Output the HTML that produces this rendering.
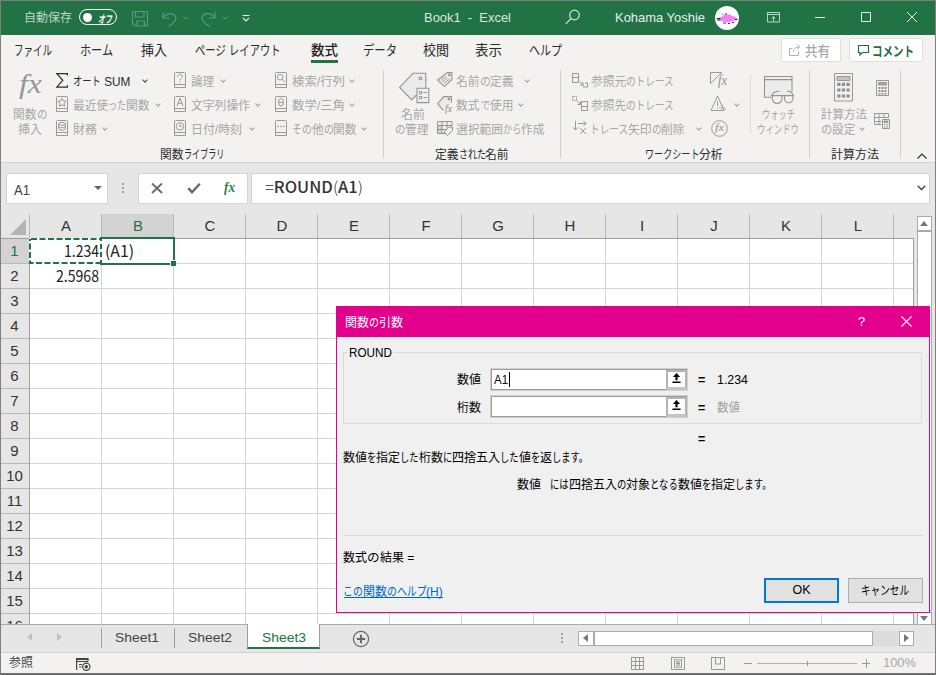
<!DOCTYPE html>
<html lang="ja"><head>
<meta charset="utf-8">
<title>Book1 - Excel</title>
<style>
*{box-sizing:border-box;margin:0;padding:0}
html,body{width:936px;height:675px;overflow:hidden;background:#f3f2f1}
body{position:relative;font-family:"Liberation Sans","Noto Sans CJK JP",sans-serif;font-size:12px;color:#262626}
.abs{position:absolute}
.t{position:absolute;white-space:nowrap;line-height:1;display:inline-block}
svg{position:absolute;overflow:visible}
#title{position:absolute;left:0;top:0;width:936px;height:35px;background:#217346}
#title .t{color:#fff}
#tabs{position:absolute;left:0;top:35px;width:936px;height:28px;background:#f3f2f1}
#tabs .t{font-size:13.5px;color:#2b2b2b;top:9px}
#ribbon{position:absolute;left:0;top:63px;width:936px;height:100px;background:#f3f2f1;border-bottom:1px solid #d2d2d2}
#ribbon .t{font-size:12px;color:#a6a6a6;margin-top:2px}
#ribbon .t.g{color:#2b2b2b}
#ribbon svg{stroke:#999;fill:none;stroke-width:1}
.sep{position:absolute;width:1px;background:#d2d0ce}
.chev{position:absolute;width:4px;height:4px;margin:2px 0 0 1px;border-right:1.3px solid #a0a0a0;border-bottom:1.3px solid #a0a0a0;transform:rotate(45deg)}
#fbar{position:absolute;left:0;top:163px;width:936px;height:51px;background:#e6e6e6;border-top:1px solid #e6e6e6}
#grid{position:absolute;left:0;top:214px;width:936px;height:410px;background:#fff}
#sheets{position:absolute;left:0;top:624px;width:936px;height:28px;background:#e6e6e6;border-top:1px solid #ababab}
#status{position:absolute;left:0;top:652px;width:936px;height:23px;background:#f3f2f1;border-top:1px solid #d0d0d0}
#frame{position:absolute;left:0;top:0;width:936px;height:675px;border:1px solid #7f7f7f;border-bottom:2px solid #6e6e6e}
#dlg{position:absolute;left:336px;top:306px;width:594px;height:307px;background:#f0f0f0;border:1px solid #e3008c}
#dlg .t{font-size:12.500px;color:#000}
</style>
</head>
<body>
<div id="title">
<span class="t" style="left:24px;top:12px;font-size:12px;color:#bcd7c8"><span style="display: inline-block; width: 48px;"><span style="display: inline-block; white-space: pre; transform-origin: 0px 0px; transform: scaleX(0.9997);">自動保存</span></span></span>
<div class="abs" style="left:79px;top:9px;width:38px;height:16px;border:1.400px solid #fff;border-radius:8px"></div>
<div class="abs" style="left:82.500px;top:12.500px;width:9px;height:9px;border-radius:5px;background:#fff"></div>
<span class="t" style="left:98px;top:13.500px;font-size:10.500px;font-weight:bold;font-style:italic"><span style="display: inline-block; width: 14px;"><span style="display: inline-block; white-space: pre; transform-origin: 0px 0px; transform: scaleX(0.6667);">オフ</span></span></span>
<svg style="left:133px;top:10px" width="120" height="18" viewBox="0 0 120 18" fill="none" stroke="#5b987a" stroke-width="1.2">
<path d="M-0.500 1.500h15v14.500h-12.500l-2.500-2.500z"></path><path d="M2.500 1.500v5.500h8.500v-5.500M4 16v-5h7.500v5"></path>
<path d="M30 2v6h6"></path><path d="M30 8c3-5 10-6 12.5-1.5c2 4-2 7-7 10"></path>
<path d="M50.5 6.5l2.5 2.5l2.5-2.500" stroke-width="1"></path>
<path d="M82 2v6h-6"></path><path d="M82 8c-3-5-10-6-12.500-1.500c-2 4 2 7 7 10"></path>
<path d="M89.500 6.500l2.500 2.500l2.500-2.500" stroke-width="1"></path>
<path d="M109.500 5.500h7M110 8l3 3l3-3" stroke="#e3eee7" stroke-width="1.200"></path>
</svg>
<span class="t" style="left: 424px; top: 11px; font-size: 13px; color: rgb(217, 232, 223); transform-origin: 0px 0px; transform: scaleX(0.995);">Book1&nbsp; -&nbsp; Excel</span>
<svg style="left:565px;top:9px" width="16" height="16" viewBox="0 0 16 16" fill="none" stroke="#d0e2d7" stroke-width="1.2"><circle cx="9.500" cy="6" r="4.800"></circle><path d="M6 9.500L0.800 14.800"></path></svg>
<span class="t" style="left: 615px; top: 11px; font-size: 13px; color: rgb(230, 240, 234); transform-origin: 0px 0px; transform: scaleX(0.996);">Kohama Yoshie</span>
<div class="abs" style="left:715px;top:6px;width:24px;height:24px;border-radius:12px;background:#fff"></div>
<svg style="left:715px;top:6px" width="24" height="24" viewBox="0 0 24 24" fill="none"><path d="M2 13.500c1-2 3-2 5-2.500c1-2 3-3 5-2c2-1 4 0 5 1c2 0 4 1 5.500 3c-2 2-4 2-6 2.500c-3 1-6 1-8 0c-2 0-4-0.500-6.500-2z" fill="#fb7cfb"></path><path d="M1.500 12.500h4M2 14h3M8 17h3M13 17.500h2M7 8.500l1-1M10 8h2M17 16.500h2M20 13.500h2.500" stroke="#222" stroke-width="0.900"></path></svg>
<svg style="left:767px;top:12px" width="13" height="10" viewBox="0 0 13 10" fill="none" stroke="#b9d5c5" stroke-width="1"><path d="M0.500 0.500h12v9.500h-12zM0.500 2.500h12M6.500 10v-5.500M4.500 6.500l2-2l2 2"></path></svg>
<svg style="left:814px;top:11px" width="110" height="12" viewBox="0 0 110 12" fill="none" stroke="#e3eee8" stroke-width="1"><path d="M1 6.500h10M47.500 1.500h9v9h-9zM93 1l10 10M103 1l-10 10"></path></svg>
</div>
<div id="tabs">
<span class="t" style="left:14px"><span style="display: inline-block; width: 38px;"><span style="display: inline-block; white-space: pre; transform-origin: 0px 0px; transform: scaleX(0.7037);">ファイル</span></span></span>
<span class="t" style="left:80px"><span style="display: inline-block; width: 33px;"><span style="display: inline-block; white-space: pre; transform-origin: 0px 0px; transform: scaleX(0.8228);">ホーム</span></span></span>
<span class="t" style="left:141px"><span style="display: inline-block; width: 26px;"><span style="display: inline-block; white-space: pre; transform-origin: 0px 0px; transform: scaleX(0.963);">挿入</span></span></span>
<span class="t" style="left:195px"><span style="display: inline-block; width: 30.75px;"><span style="display: inline-block; white-space: pre; transform-origin: 0px 0px; transform: scaleX(0.7644);">ページ</span></span><span style="display: inline-block; width: 3.65px;"><span style="display: inline-block; white-space: pre; transform-origin: 0px 0px; transform: scaleX(0.97);"> </span></span><span style="display: inline-block; width: 51.59px;"><span style="display: inline-block; white-space: pre; transform-origin: 0px 0px; transform: scaleX(0.7644);">レイアウト</span></span></span>
<span class="t" style="left:311px;font-weight:500;color:#1e1e1e"><span style="display: inline-block; width: 27px;"><span style="display: inline-block; white-space: pre; transform-origin: 0px 0px; transform: scaleX(1);">数式</span></span></span>
<div class="abs" style="left:311px;top:25px;width:27px;height:3px;background:#217346"></div>
<span class="t" style="left:363px"><span style="display: inline-block; width: 34px;"><span style="display: inline-block; white-space: pre; transform-origin: 0px 0px; transform: scaleX(0.8395);">データ</span></span></span>
<span class="t" style="left:423px"><span style="display: inline-block; width: 26px;"><span style="display: inline-block; white-space: pre; transform-origin: 0px 0px; transform: scaleX(0.963);">校閲</span></span></span>
<span class="t" style="left:475px"><span style="display: inline-block; width: 27px;"><span style="display: inline-block; white-space: pre; transform-origin: 0px 0px; transform: scaleX(1);">表示</span></span></span>
<span class="t" style="left:529px"><span style="display: inline-block; width: 33px;"><span style="display: inline-block; white-space: pre; transform-origin: 0px 0px; transform: scaleX(0.8148);">ヘルプ</span></span></span>
<div class="abs" style="left:781px;top:3px;width:60px;height:24px;background:#fff;border:1px solid #e1dfdd;border-radius:2px"></div>
<svg style="left:789px;top:9px" width="13" height="12" viewBox="0 0 13 12" fill="none" stroke="#b0b0b0" stroke-width="1"><path d="M3.500 4.500h-3v7h9v-4M4.500 8c0-3 2-5 6-5M8 0.500l2.500 2.500l-2.500 2.500"></path></svg>
<span class="t" style="left:805px;top:10px;color:#a6a6a6;font-weight:500"><span style="display: inline-block; width: 25px;"><span style="display: inline-block; white-space: pre; transform-origin: 0px 0px; transform: scaleX(0.9259);">共有</span></span></span>
<div class="abs" style="left:849px;top:3px;width:74px;height:24px;background:#fff;border:1px solid #e1dfdd;border-radius:2px"></div>
<svg style="left:858px;top:10px" width="11" height="11" viewBox="0 0 11 11" fill="none" stroke="#1e6e42" stroke-width="1.2"><path d="M0.500 0.500h10v7h-6l-2.500 2.500v-2.500h-1.500z"></path></svg>
<span class="t" style="left:872px;top:10px;color:#1e6e42;font-weight:bold"><span style="display: inline-block; width: 42px;"><span style="display: inline-block; white-space: pre; transform-origin: 0px 0px; transform: scaleX(0.7778);">コメント</span></span></span>
</div>
<div id="ribbon">
<span class="t" style="left: 19px; top: 6px; font-family: &quot;Liberation Serif&quot;, serif; font-style: italic; font-size: 27px; color: rgb(150, 150, 150); transform-origin: 0px 0px; transform: scaleX(1.1795);">fx</span>
<span class="t" style="left:13px;top:44px"><span style="display: inline-block; width: 23.54px;"><span style="display: inline-block; white-space: pre; transform-origin: 0px 0px; transform: scaleX(0.98);">関数</span></span><span style="display: inline-block; width: 10.46px;"><span style="display: inline-block; white-space: pre; transform-origin: 0px 0px; transform: scaleX(0.8709);">の</span></span></span>
<span class="t" style="left:18px;top:59px"><span style="display: inline-block; width: 24px;"><span style="display: inline-block; white-space: pre; transform-origin: 0px 0px; transform: scaleX(0.9993);">挿入</span></span></span>
<svg style="left:56px;top:10px;stroke:#2b2b2b;stroke-width:1.2" width="12" height="15" viewBox="0 0 12 15"><path d="M11.400 2.500V0.600H0.800L6.800 7.300L0.800 14.200H11.400V12.300"></path></svg>
<span class="t g" style="left:73px;top:11px"><span style="display: inline-block; width: 27.6px;"><span style="display: inline-block; white-space: pre; transform-origin: 0px 0px; transform: scaleX(0.7663);">オート</span></span><span style="display: inline-block; width: 29.4px;"><span style="display: inline-block; white-space: pre; transform-origin: 0px 0px; transform: scaleX(0.98);"> SUM</span></span></span>
<div class="chev" style="left:142px;top:13px;border-color:#444"></div>
<svg style="left:56px;top:33px" width="12" height="16" viewBox="0 0 12 16"><path d="M1.500 0.500h9a1 1 0 0 1 1 1v14h-11v-14a1 1 0 0 1 1-1zM0.500 12.500h11"></path><path d="M6 2.200l1.300 2.700l2.900 0.400l-2.100 2l0.500 2.900l-2.600-1.400l-2.600 1.400l0.500-2.900l-2.100-2l2.900-0.400z"></path></svg>
<span class="t" style="left:73px;top:35px"><span style="display: inline-block; width: 35.3px;"><span style="display: inline-block; white-space: pre; transform-origin: 0px 0px; transform: scaleX(0.98);">最近使</span></span><span style="display: inline-block; width: 18.17px;"><span style="display: inline-block; white-space: pre; transform-origin: 0px 0px; transform: scaleX(0.7566);">った</span></span><span style="display: inline-block; width: 23.54px;"><span style="display: inline-block; white-space: pre; transform-origin: 0px 0px; transform: scaleX(0.98);">関数</span></span></span>
<div class="chev" style="left:155px;top:37px"></div>
<svg style="left:56px;top:57px" width="12" height="16" viewBox="0 0 12 16"><path d="M1.500 0.500h9a1 1 0 0 1 1 1v14h-11v-14a1 1 0 0 1 1-1zM0.500 12.500h11"></path><ellipse cx="6" cy="3.800" rx="3.300" ry="1.500"></ellipse><path d="M2.700 3.800v5c0 2 6.600 2 6.600 0v-5M2.700 6.300c0 2 6.600 2 6.600 0"></path></svg>
<span class="t" style="left:73px;top:59px"><span style="display: inline-block; width: 24px;"><span style="display: inline-block; white-space: pre; transform-origin: 0px 0px; transform: scaleX(0.9993);">財務</span></span></span>
<div class="chev" style="left:102px;top:61px"></div>

<svg style="left:174px;top:9px" width="12" height="16" viewBox="0 0 12 16"><path d="M1.500 0.500h9a1 1 0 0 1 1 1v14h-11v-14a1 1 0 0 1 1-1zM0.500 12.500h11"></path><path d="M3.800 4.700c0-3 4.600-3 4.600-0.300c0 1.900-2.300 1.900-2.300 3.800M6.100 9.400v1.300"></path></svg>
<span class="t" style="left:191px;top:11px"><span style="display: inline-block; width: 23px;"><span style="display: inline-block; white-space: pre; transform-origin: 0px 0px; transform: scaleX(0.9577);">論理</span></span></span>
<div class="chev" style="left:220px;top:13px"></div>
<svg style="left:174px;top:33px" width="12" height="16" viewBox="0 0 12 16"><path d="M1.500 0.500h9a1 1 0 0 1 1 1v14h-11v-14a1 1 0 0 1 1-1zM0.500 12.500h11"></path><path d="M3 10l3-7.800l3 7.800M4 7.300h4"></path></svg>
<span class="t" style="left:191px;top:35px"><span style="display: inline-block; width: 59px;"><span style="display: inline-block; white-space: pre; transform-origin: 0px 0px; transform: scaleX(0.9831);">文字列操作</span></span></span>
<div class="chev" style="left:255px;top:37px"></div>
<svg style="left:174px;top:57px" width="12" height="16" viewBox="0 0 12 16"><path d="M1.500 0.500h9a1 1 0 0 1 1 1v14h-11v-14a1 1 0 0 1 1-1zM0.500 12.500h11"></path><circle cx="6" cy="6.300" r="3.800"></circle><path d="M6 3.800v2.700h2.200"></path></svg>
<span class="t" style="left:191px;top:59px"><span style="display: inline-block; width: 51px;"><span style="display: inline-block; white-space: pre; transform-origin: 0px 0px; transform: scaleX(0.9933);">日付/時刻</span></span></span>
<div class="chev" style="left:249px;top:61px"></div>

<svg style="left:275px;top:9px" width="12" height="16" viewBox="0 0 12 16"><path d="M1.500 0.500h9a1 1 0 0 1 1 1v14h-11v-14a1 1 0 0 1 1-1zM0.500 12.500h11"></path><circle cx="5.200" cy="5.200" r="2.800"></circle><path d="M7.200 7.300l2.600 2.800"></path></svg>
<span class="t" style="left:292px;top:11px"><span style="display: inline-block; width: 53px;"><span style="display: inline-block; white-space: pre; transform-origin: 0px 0px; transform: scaleX(1.0323);">検索/行列</span></span></span>
<div class="chev" style="left:349px;top:13px"></div>
<svg style="left:275px;top:33px" width="12" height="16" viewBox="0 0 12 16"><path d="M1.500 0.500h9a1 1 0 0 1 1 1v14h-11v-14a1 1 0 0 1 1-1zM0.500 12.500h11"></path><ellipse cx="6" cy="6.300" rx="2.400" ry="3.900"></ellipse><path d="M3.600 6.300h4.800"></path></svg>
<span class="t" style="left:292px;top:35px"><span style="display: inline-block; width: 53px;"><span style="display: inline-block; white-space: pre; transform-origin: 0px 0px; transform: scaleX(1.0323);">数学/三角</span></span></span>
<div class="chev" style="left:349px;top:37px"></div>
<svg style="left:275px;top:57px" width="12" height="16" viewBox="0 0 12 16"><path d="M1.500 0.500h9a1 1 0 0 1 1 1v14h-11v-14a1 1 0 0 1 1-1zM0.500 12.500h11"></path><path d="M2.500 6.500h1.400M5.300 6.500h1.400M8.100 6.500h1.400" stroke-width="1.400"></path></svg>
<span class="t" style="left:292px;top:59px"><span style="display: inline-block; width: 19.79px;"><span style="display: inline-block; white-space: pre; transform-origin: 0px 0px; transform: scaleX(0.824);">その</span></span><span style="display: inline-block; width: 11.78px;"><span style="display: inline-block; white-space: pre; transform-origin: 0px 0px; transform: scaleX(0.98);">他</span></span><span style="display: inline-block; width: 9.9px;"><span style="display: inline-block; white-space: pre; transform-origin: 0px 0px; transform: scaleX(0.824);">の</span></span><span style="display: inline-block; width: 23.54px;"><span style="display: inline-block; white-space: pre; transform-origin: 0px 0px; transform: scaleX(0.98);">関数</span></span></span>
<div class="chev" style="left:361px;top:61px"></div>
<span class="t g" style="left:160px;top:84px"><span style="display: inline-block; width: 23.54px;"><span style="display: inline-block; white-space: pre; transform-origin: 0px 0px; transform: scaleX(0.98);">関数</span></span><span style="display: inline-block; width: 40.46px;"><span style="display: inline-block; white-space: pre; transform-origin: 0px 0px; transform: scaleX(0.6742);">ライブラリ</span></span></span>
<div class="sep" style="left:383px;top:7px;height:88px"></div>

<svg style="left:399px;top:9px;stroke:#949494;stroke-width:1.100" width="31" height="32" viewBox="0 0 31 32"><path d="M0.600 15.400L14 1.300H26.800V13.500L12.600 27.700z" fill="#ebebeb" stroke="none"></path><path d="M26.800 16V1.300H14L0.600 15.400L12.600 27.700L17.500 23"></path><circle cx="21.400" cy="6.400" r="1.300"></circle><path d="M18 16.300h11.800v14.300h-11.800z" fill="#f0f0f0"></path><path d="M20.500 19.500h2.300v2.300h-2.300zM20.500 24.500h2.300v2.300h-2.300zM24.500 20.600h3.500M24.500 25.600h3.500" stroke-width="1"></path></svg>
<span class="t" style="left:401px;top:44px"><span style="display: inline-block; width: 24px;"><span style="display: inline-block; white-space: pre; transform-origin: 0px 0px; transform: scaleX(0.9993);">名前</span></span></span>
<span class="t" style="left:395px;top:59px"><span style="display: inline-block; width: 10.46px;"><span style="display: inline-block; white-space: pre; transform-origin: 0px 0px; transform: scaleX(0.8709);">の</span></span><span style="display: inline-block; width: 23.54px;"><span style="display: inline-block; white-space: pre; transform-origin: 0px 0px; transform: scaleX(0.98);">管理</span></span></span>
<svg style="left:437px;top:9px;stroke:#949494;stroke-width:1.100" width="17" height="15" viewBox="0 0 17 15"><path d="M0.600 8L10.400 0.600H14.900V7.500L7.500 14.600z" fill="#ebebeb"></path><circle cx="12.300" cy="3" r="0.800" fill="#8e8e8e"></circle><path d="M3.800 8.300l5-4M5.500 9.800l5-4M7.200 11.300l5-4" stroke-width="0.900"></path></svg>
<span class="t" style="left:456px;top:11px"><span style="display: inline-block; width: 23.54px;"><span style="display: inline-block; white-space: pre; transform-origin: 0px 0px; transform: scaleX(0.98);">名前</span></span><span style="display: inline-block; width: 10.93px;"><span style="display: inline-block; white-space: pre; transform-origin: 0px 0px; transform: scaleX(0.9096);">の</span></span><span style="display: inline-block; width: 23.54px;"><span style="display: inline-block; white-space: pre; transform-origin: 0px 0px; transform: scaleX(0.98);">定義</span></span></span>
<div class="chev" style="left:524px;top:13px"></div>
<svg style="left:437px;top:33px;stroke:#949494;stroke-width:1.100" width="17" height="16" viewBox="0 0 17 16"><path d="M14.500 6.500V0.600H6.800L0.600 7.700L6.400 14.400" fill="#ebebeb"></path><circle cx="12" cy="3" r="0.800" fill="#8e8e8e"></circle></svg><span class="t" style="left: 445px; top: 39px; font-family: &quot;Liberation Serif&quot;, serif; font-style: italic; font-size: 10px; color: rgb(133, 133, 133); transform-origin: 0px 0px; transform: scaleX(0.9697);">fx</span>
<span class="t" style="left:456px;top:35px"><span style="display: inline-block; width: 23.54px;"><span style="display: inline-block; white-space: pre; transform-origin: 0px 0px; transform: scaleX(0.98);">数式</span></span><span style="display: inline-block; width: 10.93px;"><span style="display: inline-block; white-space: pre; transform-origin: 0px 0px; transform: scaleX(0.9096);">で</span></span><span style="display: inline-block; width: 23.54px;"><span style="display: inline-block; white-space: pre; transform-origin: 0px 0px; transform: scaleX(0.98);">使用</span></span></span>
<div class="chev" style="left:518px;top:37px"></div>
<svg style="left:437px;top:58px;stroke:#909090;stroke-width:1" width="17" height="16" viewBox="0 0 17 16"><path d="M0.600 4.500h4.400v8h-4.400z" fill="#d6d6d6" stroke="none"></path><path d="M8 12.500H0.600V0.600H15V5M0.600 4.500H15M0.600 8.500H9M5 0.600V12.500M10 0.600V7"></path><path d="M7 11L12 6H15.500V9.500L10.500 14.500z" fill="#f0f0f0"></path></svg>
<span class="t" style="left:456px;top:59px"><span style="display: inline-block; width: 47.06px;"><span style="display: inline-block; white-space: pre; transform-origin: 0px 0px; transform: scaleX(0.98);">選択範囲</span></span><span style="display: inline-block; width: 18.41px;"><span style="display: inline-block; white-space: pre; transform-origin: 0px 0px; transform: scaleX(0.7666);">から</span></span><span style="display: inline-block; width: 23.54px;"><span style="display: inline-block; white-space: pre; transform-origin: 0px 0px; transform: scaleX(0.98);">作成</span></span></span>
<span class="t g" style="left:435px;top:84px"><span style="display: inline-block; width: 23.54px;"><span style="display: inline-block; white-space: pre; transform-origin: 0px 0px; transform: scaleX(0.98);">定義</span></span><span style="display: inline-block; width: 26.93px;"><span style="display: inline-block; white-space: pre; transform-origin: 0px 0px; transform: scaleX(0.7477);">された</span></span><span style="display: inline-block; width: 23.54px;"><span style="display: inline-block; white-space: pre; transform-origin: 0px 0px; transform: scaleX(0.98);">名前</span></span></span>
<div class="sep" style="left:560px;top:7px;height:88px"></div>

<svg style="left:572px;top:10px" width="17" height="15" viewBox="0 0 17 15"><path d="M0.500 0.500h6v9h-6zM0.500 4.500h6M7.500 8.500l3.500 3.500M8 12h3v-3M13 10h2.500v4h-4v-1.500"></path></svg>
<span class="t" style="left:591px;top:11px"><span style="display: inline-block; width: 35.3px;"><span style="display: inline-block; white-space: pre; transform-origin: 0px 0px; transform: scaleX(0.98);">参照元</span></span><span style="display: inline-block; width: 47.7px;"><span style="display: inline-block; white-space: pre; transform-origin: 0px 0px; transform: scaleX(0.803);">のトレース</span></span></span>
<svg style="left:572px;top:33px" width="17" height="16" viewBox="0 0 17 16"><path d="M0.500 0.500h4v4h-4z" stroke-dasharray="2 1"></path><path d="M5 5l3.500 3M5.500 8.500h3v-3M9.500 5.500h6v9h-6zM9.500 10.500h6"></path></svg>
<span class="t" style="left:591px;top:35px"><span style="display: inline-block; width: 35.3px;"><span style="display: inline-block; white-space: pre; transform-origin: 0px 0px; transform: scaleX(0.98);">参照先</span></span><span style="display: inline-block; width: 47.7px;"><span style="display: inline-block; white-space: pre; transform-origin: 0px 0px; transform: scaleX(0.803);">のトレース</span></span></span>
<svg style="left:572px;top:57px" width="17" height="15" viewBox="0 0 17 15"><path d="M3.500 1v9M1 7.500l2.500 2.500l2.500-2.500M6 3.500h8M11.500 1l2.500 2.500l-2.500 2.500M8 8l6 6M14 8l-6 6"></path></svg>
<span class="t" style="left:590px;top:59px"><span style="display: inline-block; width: 38.24px;"><span style="display: inline-block; white-space: pre; transform-origin: 0px 0px; transform: scaleX(0.8066);">トレース</span></span><span style="display: inline-block; width: 23.54px;"><span style="display: inline-block; white-space: pre; transform-origin: 0px 0px; transform: scaleX(0.98);">矢印</span></span><span style="display: inline-block; width: 9.69px;"><span style="display: inline-block; white-space: pre; transform-origin: 0px 0px; transform: scaleX(0.8066);">の</span></span><span style="display: inline-block; width: 23.54px;"><span style="display: inline-block; white-space: pre; transform-origin: 0px 0px; transform: scaleX(0.98);">削除</span></span></span>
<div class="chev" style="left:696px;top:61px"></div>
<svg style="left:710px;top:8px" width="18" height="17" viewBox="0 0 18 17"><path d="M0.500 1.500h11l-11 11z"></path></svg>
<span class="t" style="left: 718px; top: 9px; font-family: &quot;Liberation Serif&quot;, serif; font-style: italic; font-size: 14px; color: rgb(144, 144, 144); transform-origin: 0px 0px; transform: scaleX(0.8903);">fx</span>
<svg style="left:710px;top:32px" width="18" height="17" viewBox="0 0 18 17"><path d="M7.500 1L1 15.500h13zM7.500 6v5M7.500 13v1"></path><path d="M11 9l5 6M9 12l5 3" stroke-width="0.800"></path></svg>
<div class="chev" style="left:734px;top:37px"></div>
<svg style="left:711px;top:57px" width="17" height="17" viewBox="0 0 17 17"><circle cx="8.500" cy="8.500" r="7.800"></circle></svg>
<span class="t" style="left: 715px; top: 57px; font-family: &quot;Liberation Serif&quot;, serif; font-style: italic; font-size: 11px; color: rgb(144, 144, 144); transform-origin: 0px 0px; transform: scaleX(1.1316);">fx</span>
<span class="t g" style="left:645px;top:84px"><span style="display: inline-block; width: 54.46px;"><span style="display: inline-block; white-space: pre; transform-origin: 0px 0px; transform: scaleX(0.7563);">ワークシート</span></span><span style="display: inline-block; width: 23.54px;"><span style="display: inline-block; white-space: pre; transform-origin: 0px 0px; transform: scaleX(0.98);">分析</span></span></span>
<div class="sep" style="left:750px;top:12px;height:58px;background:#dddbd9"></div>

<svg style="left:764px;top:13px;stroke:#949494;stroke-width:1.100" width="32" height="29" viewBox="0 0 32 29"><path d="M0.500 0.500h27.500v19h-27.500z" fill="#ececec" stroke="none"></path><path d="M7.500 21.200H0.500V0.500H28V15.500M0.500 3.600H28"></path><path d="M6.800 19.600H29.500M8.400 19.600v3a4.800 4.800 0 0 0 9.600 0v-3z" fill="#f3f2f1"></path><path d="M20.500 19.600v3a4.200 4.200 0 0 0 8.400 0v-3z" fill="#f3f2f1"></path><path d="M8 19.600c0-3 4-4.600 7.600-4.300M29 19.600c0-3-3-4.600-6-4.300"></path></svg>
<span class="t" style="left:762px;top:44px"><span style="display: inline-block; width: 33px;"><span style="display: inline-block; white-space: pre; transform-origin: 0px 0px; transform: scaleX(0.6873);">ウォッチ</span></span></span>
<span class="t" style="left:757px;top:59px"><span style="display: inline-block; width: 42px;"><span style="display: inline-block; white-space: pre; transform-origin: 0px 0px; transform: scaleX(0.6998);">ウィンドウ</span></span></span>
<div class="sep" style="left:809px;top:7px;height:88px"></div>

<svg style="left:834px;top:10px" width="19" height="29" viewBox="0 0 19 29"><path d="M0.500 0.500h18v27.500h-18z" fill="#f0f0f0"></path><path d="M3 3.500h13v4h-13z" fill="#c4c4c4"></path><path d="M3.3 9.8h3.200v3.200h-3.200zM7.9 9.8h3.200v3.200h-3.200zM12.5 9.8h3.200v3.200h-3.200zM3.3 15.4h3.200v3.200h-3.200zM7.9 15.4h3.200v3.200h-3.200zM12.5 15.4h3.200v3.200h-3.200zM3.3 21.4h3.200v3.200h-3.200zM7.9 21.4h3.200v3.200h-3.200zM12.5 21.4h3.200v3.200h-3.200z" fill="#8e8e8e" stroke="none"></path></svg>
<span class="t" style="left:821px;top:44px"><span style="display: inline-block; width: 46px;"><span style="display: inline-block; white-space: pre; transform-origin: 0px 0px; transform: scaleX(0.958);">計算方法</span></span></span>
<span class="t" style="left:821px;top:59px"><span style="display: inline-block; width: 11.46px;"><span style="display: inline-block; white-space: pre; transform-origin: 0px 0px; transform: scaleX(0.9541);">の</span></span><span style="display: inline-block; width: 23.54px;"><span style="display: inline-block; white-space: pre; transform-origin: 0px 0px; transform: scaleX(0.98);">設定</span></span></span>
<div class="chev" style="left:859px;top:61px"></div>
<svg style="left:876px;top:17px" width="13" height="16" viewBox="0 0 13 16"><path d="M0.500 0.500h12v15h-12z"></path><path d="M2.500 2.500h8v2.500h-8z" fill="#a8a8a8"></path><path d="M2.500 7h2v2h-2zM5.500 7h2v2h-2zM8.500 7h2v2h-2zM2.500 10h2v2h-2zM5.500 10h2v2h-2zM8.500 10h2v2h-2zM2.500 13h2v1.500h-2zM5.500 13h2v1.500h-2zM8.500 13h2v1.500h-2z" fill="#8e8e8e" stroke="none"></path></svg>
<svg style="left:874px;top:50px" width="16" height="16" viewBox="0 0 16 16"><path d="M0.500 0.500h14v4M0.500 0.500v11h7M0.500 4.500h14M0.500 8.500h7M5 0.500v11M10 0.500v4"></path><path d="M8.500 6.500h7v9h-7z"></path><path d="M10 8h4v1.500h-4z" fill="#a8a8a8"></path><path d="M10 11h1.300v1.300h-1.300zM12.500 11h1.300v1.300h-1.300zM10 13.200h1.300v1.300h-1.300zM12.500 13.200h1.300v1.300h-1.300z" fill="#8e8e8e" stroke="none"></path></svg>
<span class="t g" style="left:831px;top:84px"><span style="display: inline-block; width: 48px;"><span style="display: inline-block; white-space: pre; transform-origin: 0px 0px; transform: scaleX(0.9997);">計算方法</span></span></span>
<div class="sep" style="left:900px;top:7px;height:88px"></div>
<svg style="left:917px;top:90px;stroke:#333;stroke-width:1.200" width="10" height="6" viewBox="0 0 10 6"><path d="M0.500 5.500l4.500-4.500l4.500 4.500"></path></svg>
</div>
<div id="fbar">
<div class="abs" style="left:6px;top:9px;width:102px;height:31px;background:#fff;border:1px solid #d4d4d4"></div>
<span class="t" style="left: 14px; top: 19px; font-size: 14px; color: rgb(68, 68, 68); transform-origin: 0px 0px; transform: scaleX(0.9343);">A1</span>
<div class="abs" style="left:94px;top:22px;width:0;height:0;border-left:4px solid transparent;border-right:4px solid transparent;border-top:4px solid #666"></div>
<div class="abs" style="left:122px;top:19px;width:2px;height:2px;background:#a0a0a0;box-shadow:0 4px 0 #a0a0a0,0 8px 0 #a0a0a0"></div>
<div class="abs" style="left:138px;top:9px;width:110px;height:31px;background:#fff;border:1px solid #d4d4d4"></div>
<svg style="left:151px;top:18px" width="12" height="12" viewBox="0 0 12 12" fill="none" stroke="#6a6a6a" stroke-width="1.800"><path d="M1 1.500l10 9.500M11 1.500l-10 9.500"></path></svg>
<svg style="left:187px;top:18px" width="14" height="12" viewBox="0 0 14 12" fill="none" stroke="#6a6a6a" stroke-width="2.400"><path d="M1.200 6.200l3.800 4l7.800-8.500"></path></svg>
<span class="t" style="left: 224px; top: 17px; font-family: &quot;Liberation Serif&quot;, serif; font-style: italic; font-weight: bold; font-size: 14px; color: rgb(46, 125, 79); transform-origin: 0px 0px; transform: scaleX(0.9424);">fx</span>
<div class="abs" style="left:251px;top:9px;width:679px;height:31px;background:#fff;border:1px solid #d4d4d4"></div>
<span class="t" style="left: 265px; top: 15px; font-size: 15.5px; color: rgb(51, 51, 51); font-family: &quot;Noto Sans CJK JP&quot;, &quot;Liberation Sans&quot;, sans-serif; font-weight: 300; transform-origin: 0px 0px; transform: scaleX(1.0652);">=<b style="font-weight:500">ROUND</b>(<b style="font-weight:500">A1</b>)</span>
<svg style="left:917px;top:21px" width="9" height="6" viewBox="0 0 9 6" fill="none" stroke="#555" stroke-width="1.600"><path d="M0.800 0.800l3.700 3.700l3.700-3.700"></path></svg>
</div>
<div id="grid">
<div class="abs" style="left:0;top:0;width:914px;height:25px;background:#e6e6e6;border-bottom:1px solid #9e9e9e"></div>
<div class="abs" style="left:0;top:25px;width:30px;height:386px;background:#e6e6e6;border-right:1px solid #9e9e9e"></div>
<div class="abs" style="left:10px;top:5px;width:0;height:0;border-left:16px solid transparent;border-bottom:16px solid #b4b4b4"></div>
<div class="abs" style="left:102px;top:0;width:71px;height:24px;background:#d3d3d3"></div>
<div class="abs" style="left:0;top:25px;width:29px;height:24px;background:#d3d3d3"></div>
<div class="abs" style="left:29px;top:0;width:1px;height:24px;background:#b8b8b8"></div>
<span class="t" style="left:30px;top:4px;width:72px;text-align:center;font-size:15px;color:#333">A</span>
<div class="abs" style="left:101px;top:0;width:1px;height:24px;background:#b8b8b8"></div>
<div class="abs" style="left:101px;top:25px;width:1px;height:386px;background:#d4d4d4"></div>
<span class="t" style="left:102px;top:4px;width:72px;text-align:center;font-size:15px;color:#217346">B</span>
<div class="abs" style="left:173px;top:0;width:1px;height:24px;background:#b8b8b8"></div>
<div class="abs" style="left:173px;top:25px;width:1px;height:386px;background:#d4d4d4"></div>
<span class="t" style="left:174px;top:4px;width:72px;text-align:center;font-size:15px;color:#333">C</span>
<div class="abs" style="left:245px;top:0;width:1px;height:24px;background:#b8b8b8"></div>
<div class="abs" style="left:245px;top:25px;width:1px;height:386px;background:#d4d4d4"></div>
<span class="t" style="left:246px;top:4px;width:72px;text-align:center;font-size:15px;color:#333">D</span>
<div class="abs" style="left:317px;top:0;width:1px;height:24px;background:#b8b8b8"></div>
<div class="abs" style="left:317px;top:25px;width:1px;height:386px;background:#d4d4d4"></div>
<span class="t" style="left:318px;top:4px;width:72px;text-align:center;font-size:15px;color:#333">E</span>
<div class="abs" style="left:389px;top:0;width:1px;height:24px;background:#b8b8b8"></div>
<div class="abs" style="left:389px;top:25px;width:1px;height:386px;background:#d4d4d4"></div>
<span class="t" style="left:390px;top:4px;width:72px;text-align:center;font-size:15px;color:#333">F</span>
<div class="abs" style="left:461px;top:0;width:1px;height:24px;background:#b8b8b8"></div>
<div class="abs" style="left:461px;top:25px;width:1px;height:386px;background:#d4d4d4"></div>
<span class="t" style="left:462px;top:4px;width:72px;text-align:center;font-size:15px;color:#333">G</span>
<div class="abs" style="left:533px;top:0;width:1px;height:24px;background:#b8b8b8"></div>
<div class="abs" style="left:533px;top:25px;width:1px;height:386px;background:#d4d4d4"></div>
<span class="t" style="left:534px;top:4px;width:72px;text-align:center;font-size:15px;color:#333">H</span>
<div class="abs" style="left:605px;top:0;width:1px;height:24px;background:#b8b8b8"></div>
<div class="abs" style="left:605px;top:25px;width:1px;height:386px;background:#d4d4d4"></div>
<span class="t" style="left:606px;top:4px;width:72px;text-align:center;font-size:15px;color:#333">I</span>
<div class="abs" style="left:677px;top:0;width:1px;height:24px;background:#b8b8b8"></div>
<div class="abs" style="left:677px;top:25px;width:1px;height:386px;background:#d4d4d4"></div>
<span class="t" style="left:678px;top:4px;width:72px;text-align:center;font-size:15px;color:#333">J</span>
<div class="abs" style="left:749px;top:0;width:1px;height:24px;background:#b8b8b8"></div>
<div class="abs" style="left:749px;top:25px;width:1px;height:386px;background:#d4d4d4"></div>
<span class="t" style="left:750px;top:4px;width:72px;text-align:center;font-size:15px;color:#333">K</span>
<div class="abs" style="left:821px;top:0;width:1px;height:24px;background:#b8b8b8"></div>
<div class="abs" style="left:821px;top:25px;width:1px;height:386px;background:#d4d4d4"></div>
<span class="t" style="left:822px;top:4px;width:72px;text-align:center;font-size:15px;color:#333">L</span>
<div class="abs" style="left:893px;top:0;width:1px;height:24px;background:#b8b8b8"></div>
<div class="abs" style="left:893px;top:25px;width:1px;height:386px;background:#d4d4d4"></div>
<span class="t" style="left:0;top:29px;width:29px;text-align:center;font-size:15px;color:#217346">1</span>
<div class="abs" style="left:0;top:49px;width:29px;height:1px;background:#b8b8b8"></div>
<div class="abs" style="left:30px;top:49px;width:884px;height:1px;background:#d4d4d4"></div>
<span class="t" style="left:0;top:54px;width:29px;text-align:center;font-size:15px;color:#333">2</span>
<div class="abs" style="left:0;top:74px;width:29px;height:1px;background:#b8b8b8"></div>
<div class="abs" style="left:30px;top:74px;width:884px;height:1px;background:#d4d4d4"></div>
<span class="t" style="left:0;top:79px;width:29px;text-align:center;font-size:15px;color:#333">3</span>
<div class="abs" style="left:0;top:99px;width:29px;height:1px;background:#b8b8b8"></div>
<div class="abs" style="left:30px;top:99px;width:884px;height:1px;background:#d4d4d4"></div>
<span class="t" style="left:0;top:104px;width:29px;text-align:center;font-size:15px;color:#333">4</span>
<div class="abs" style="left:0;top:124px;width:29px;height:1px;background:#b8b8b8"></div>
<div class="abs" style="left:30px;top:124px;width:884px;height:1px;background:#d4d4d4"></div>
<span class="t" style="left:0;top:129px;width:29px;text-align:center;font-size:15px;color:#333">5</span>
<div class="abs" style="left:0;top:149px;width:29px;height:1px;background:#b8b8b8"></div>
<div class="abs" style="left:30px;top:149px;width:884px;height:1px;background:#d4d4d4"></div>
<span class="t" style="left:0;top:154px;width:29px;text-align:center;font-size:15px;color:#333">6</span>
<div class="abs" style="left:0;top:174px;width:29px;height:1px;background:#b8b8b8"></div>
<div class="abs" style="left:30px;top:174px;width:884px;height:1px;background:#d4d4d4"></div>
<span class="t" style="left:0;top:179px;width:29px;text-align:center;font-size:15px;color:#333">7</span>
<div class="abs" style="left:0;top:199px;width:29px;height:1px;background:#b8b8b8"></div>
<div class="abs" style="left:30px;top:199px;width:884px;height:1px;background:#d4d4d4"></div>
<span class="t" style="left:0;top:204px;width:29px;text-align:center;font-size:15px;color:#333">8</span>
<div class="abs" style="left:0;top:224px;width:29px;height:1px;background:#b8b8b8"></div>
<div class="abs" style="left:30px;top:224px;width:884px;height:1px;background:#d4d4d4"></div>
<span class="t" style="left:0;top:229px;width:29px;text-align:center;font-size:15px;color:#333">9</span>
<div class="abs" style="left:0;top:249px;width:29px;height:1px;background:#b8b8b8"></div>
<div class="abs" style="left:30px;top:249px;width:884px;height:1px;background:#d4d4d4"></div>
<span class="t" style="left:0;top:254px;width:29px;text-align:center;font-size:15px;color:#333">10</span>
<div class="abs" style="left:0;top:274px;width:29px;height:1px;background:#b8b8b8"></div>
<div class="abs" style="left:30px;top:274px;width:884px;height:1px;background:#d4d4d4"></div>
<span class="t" style="left:0;top:279px;width:29px;text-align:center;font-size:15px;color:#333">11</span>
<div class="abs" style="left:0;top:299px;width:29px;height:1px;background:#b8b8b8"></div>
<div class="abs" style="left:30px;top:299px;width:884px;height:1px;background:#d4d4d4"></div>
<span class="t" style="left:0;top:304px;width:29px;text-align:center;font-size:15px;color:#333">12</span>
<div class="abs" style="left:0;top:324px;width:29px;height:1px;background:#b8b8b8"></div>
<div class="abs" style="left:30px;top:324px;width:884px;height:1px;background:#d4d4d4"></div>
<span class="t" style="left:0;top:329px;width:29px;text-align:center;font-size:15px;color:#333">13</span>
<div class="abs" style="left:0;top:349px;width:29px;height:1px;background:#b8b8b8"></div>
<div class="abs" style="left:30px;top:349px;width:884px;height:1px;background:#d4d4d4"></div>
<span class="t" style="left:0;top:354px;width:29px;text-align:center;font-size:15px;color:#333">14</span>
<div class="abs" style="left:0;top:374px;width:29px;height:1px;background:#b8b8b8"></div>
<div class="abs" style="left:30px;top:374px;width:884px;height:1px;background:#d4d4d4"></div>
<span class="t" style="left:0;top:379px;width:29px;text-align:center;font-size:15px;color:#333">15</span>
<div class="abs" style="left:0;top:399px;width:29px;height:1px;background:#b8b8b8"></div>
<div class="abs" style="left:30px;top:399px;width:884px;height:1px;background:#d4d4d4"></div>
<span class="t" style="left:0;top:404px;width:29px;text-align:center;font-size:15px;color:#333">16</span>
<div class="abs" style="left:0;top:424px;width:29px;height:1px;background:#b8b8b8"></div>
<div class="abs" style="left:30px;top:424px;width:884px;height:1px;background:#d4d4d4"></div>
<span class="t" style="left: 64px; top: 28px; font-size: 16px; font-family: &quot;Noto Sans CJK JP&quot;, &quot;Liberation Sans&quot;, sans-serif; color: rgb(34, 34, 34); transform-origin: 0px 0px; transform: scaleX(0.8757);">1.234</span>
<span class="t" style="left: 56px; top: 53px; font-size: 16px; font-family: &quot;Noto Sans CJK JP&quot;, &quot;Liberation Sans&quot;, sans-serif; color: rgb(34, 34, 34); transform-origin: 0px 0px; transform: scaleX(0.8801);">2.5968</span>
<span class="t" style="left: 105px; top: 28px; font-size: 16px; font-family: &quot;Noto Sans CJK JP&quot;, &quot;Liberation Sans&quot;, sans-serif; color: rgb(34, 34, 34); transform-origin: 0px 0px; transform: scaleX(0.9851);">(A1)</span>
<svg style="left:29px;top:24px" width="73" height="26" viewBox="0 0 73 26" fill="none"><rect x="1" y="1" width="71" height="24" stroke="#fff" stroke-width="2"></rect><rect x="1" y="1" width="71" height="24" stroke="#217346" stroke-width="2" stroke-dasharray="6 2.500" stroke-dashoffset="-1"></rect></svg>
<div class="abs" style="left:100px;top:23px;width:75px;height:28px;border:2px solid #217346"></div>
<svg style="left:100px;top:23px" width="2" height="28" viewBox="0 0 2 28"><path d="M1 0v28" stroke="#fff" stroke-width="2" stroke-dasharray="3 5" stroke-dashoffset="-4"></path></svg>
<div class="abs" style="left:170px;top:46px;width:6px;height:6px;background:#217346;border-left:1px solid #fff;border-top:1px solid #fff"></div>
<div class="abs" style="left:914px;top:0;width:22px;height:411px;background:#e6e6e6"></div>
<div class="abs" style="left:913px;top:25px;width:1px;height:386px;background:#9e9e9e"></div>
<div class="abs" style="left:917px;top:2px;width:15px;height:15px;background:#fff;border:1px solid #ababab"></div>
<div class="abs" style="left:920px;top:7px;width:0;height:0;border-left:4.5px solid transparent;border-right:4.5px solid transparent;border-bottom:5px solid #777"></div>
<div class="abs" style="left:917px;top:17px;width:15px;height:380px;background:#fff;border:1px solid #ababab"></div>
<div class="abs" style="left:917px;top:398px;width:15px;height:13px;background:#fff;border:1px solid #ababab"></div>
<div class="abs" style="left:920px;top:402px;width:0;height:0;border-left:4.5px solid transparent;border-right:4.5px solid transparent;border-top:5px solid #777"></div>
</div>
<div id="sheets">
<div class="abs" style="left:27px;top:8px;width:0;height:0;border-top:4px solid transparent;border-bottom:4px solid transparent;border-right:5px solid #c0c0c0"></div>
<div class="abs" style="left:57px;top:8px;width:0;height:0;border-top:4px solid transparent;border-bottom:4px solid transparent;border-left:5px solid #c0c0c0"></div>
<div class="abs" style="left:101px;top:3px;width:1px;height:20px;background:#9e9e9e"></div>
<span class="t" style="left: 115px; top: 6px; font-size: 13px; color: rgb(68, 68, 68); transform-origin: 0px 0px; transform: scaleX(1.0679);">Sheet1</span>
<div class="abs" style="left:174px;top:3px;width:1px;height:20px;background:#9e9e9e"></div>
<span class="t" style="left: 188px; top: 6px; font-size: 13px; color: rgb(68, 68, 68); transform-origin: 0px 0px; transform: scaleX(1.0679);">Sheet2</span>
<div class="abs" style="left:247px;top:-1px;width:73px;height:25px;background:#fff;border-bottom:2px solid #217346;border-right:1px solid #9e9e9e;border-left:1px solid #9e9e9e"></div>
<span class="t" style="left: 262px; top: 6px; font-size: 13px; color: rgb(33, 115, 70); transform-origin: 0px 0px; transform: scaleX(1.0679);">Sheet3</span>
<svg style="left:352px;top:5px" width="18" height="18" viewBox="0 0 18 18" fill="none" stroke="#666" stroke-width="1.200"><circle cx="9" cy="9" r="7.600"></circle><path d="M9 4.800v8.400M4.800 9h8.400" stroke-width="1.900"></path></svg>
<div class="abs" style="left:561px;top:8px;width:2px;height:2px;background:#a0a0a0;box-shadow:0 4px 0 #a0a0a0,0 8px 0 #a0a0a0"></div>
<div class="abs" style="left:578px;top:6px;width:16px;height:15px;background:#fff;border:1px solid #ababab"></div>
<div class="abs" style="left:583px;top:9px;width:0;height:0;border-top:4px solid transparent;border-bottom:4px solid transparent;border-right:5px solid #777"></div>
<div class="abs" style="left:594px;top:6px;width:279px;height:15px;background:#fff;border:1px solid #ababab"></div>
<div class="abs" style="left:873px;top:6px;width:25px;height:15px;background:#dcdcdc"></div>
<div class="abs" style="left:899px;top:6px;width:15px;height:15px;background:#fff;border:1px solid #ababab"></div>
<div class="abs" style="left:904px;top:9px;width:0;height:0;border-top:4px solid transparent;border-bottom:4px solid transparent;border-left:5px solid #777"></div>
</div>
<div id="status">
<span class="t" style="left:9px;top:4px;font-size:12px;color:#444"><span style="display: inline-block; width: 24px;"><span style="display: inline-block; white-space: pre; transform-origin: 0px 0px; transform: scaleX(0.9993);">参照</span></span></span>
<svg style="left:76px;top:5px" width="15" height="13" viewBox="0 0 15 13" fill="none" stroke="#444" stroke-width="1.200"><path d="M0.600 12v-11.400h11.400v3M0.600 1.500h11.400M0.600 3.500h11.400M3 6.500h3M3 9h2.500"></path><circle cx="10.300" cy="8.800" r="3.600"></circle><circle cx="10.300" cy="8.800" r="1.700" fill="#444" stroke="none"></circle></svg>
<svg style="left:631px;top:4px" width="13" height="13" viewBox="0 0 13 12" preserveAspectRatio="none" fill="none" stroke="#9a9a9a" stroke-width="1"><path d="M0.500 0.500h12v11h-12zM0.500 4.200h12M0.500 7.900h12M4.500 0.500v11M8.500 0.500v11"></path></svg>
<svg style="left:671px;top:4px" width="14" height="13" viewBox="0 0 14 12" preserveAspectRatio="none" fill="none" stroke="#9a9a9a" stroke-width="1"><path d="M0.500 0.500h13v11h-13zM3.500 2.500h7v7h-7zM5 4.500h4M5 6h4M5 7.500h4"></path></svg>
<svg style="left:711px;top:4px" width="14" height="13" viewBox="0 0 14 12" preserveAspectRatio="none" fill="none" stroke="#9a9a9a" stroke-width="1"><path d="M0.500 0.500h13v11h-13zM4.500 0.500v6h5v-6"></path></svg>
<div class="abs" style="left:744px;top:10px;width:8px;height:1px;background:#9a9a9a"></div>
<div class="abs" style="left:757px;top:10px;width:100px;height:1px;background:#b0b0b0"></div>
<div class="abs" style="left:807px;top:8px;width:1px;height:5px;background:#9a9a9a"></div>
<div class="abs" style="left:862px;top:10px;width:8px;height:1px;background:#9a9a9a"></div>
<div class="abs" style="left:866px;top:6px;width:1px;height:9px;background:#9a9a9a"></div>
<span class="t" style="left: 883px; top: 4px; font-size: 12px; color: rgb(166, 166, 166); transform-origin: 0px 0px; transform: scaleX(1.0748);">100%</span>
</div>
<div id="dlg">
<div class="abs" style="left:0;top:0;width:592px;height:30px;background:#e3008c"></div>
<span class="t" style="left:8px;top:10px;color:#fff"><span style="display: inline-block; width: 24.02px;"><span style="display: inline-block; white-space: pre; transform-origin: 0px 0px; transform: scaleX(0.96);">関数</span></span><span style="display: inline-block; width: 9.97px;"><span style="display: inline-block; white-space: pre; transform-origin: 0px 0px; transform: scaleX(0.7966);">の</span></span><span style="display: inline-block; width: 24.02px;"><span style="display: inline-block; white-space: pre; transform-origin: 0px 0px; transform: scaleX(0.96);">引数</span></span></span>
<span class="t" style="left:521px;top:8px;color:#fff;font-size:13px">?</span>
<svg style="left:564px;top:9px" width="11" height="11" viewBox="0 0 11 11" fill="none" stroke="#fff" stroke-width="1.100"><path d="M0.500 0.500l10 10M10.500 0.500l-10 10"></path></svg>
<div class="abs" style="left:6px;top:45px;width:579px;height:72px;border:1px solid #dcdcdc"></div>
<div class="abs" style="left:10px;top:40px;width:47px;height:12px;background:#f0f0f0"></div><span class="t" style="left: 12px; top: 40px; transform-origin: 0px 0px; transform: scaleX(0.938);">ROUND</span>
<span class="t" style="left:120px;top:67px"><span style="display: inline-block; width: 24px;"><span style="display: inline-block; white-space: pre; transform-origin: 0px 0px; transform: scaleX(0.9594);">数値</span></span></span>
<div class="abs" style="left:154px;top:62px;width:196px;height:21px;background:#fff;border:1px solid #9c9c9c;box-shadow:0 0 0 1px #d0d0d0"></div>
<span class="t" style="left: 157px; top: 67px; transform-origin: 0px 0px; transform: scaleX(0.9152);">A1</span>
<div class="abs" style="left:172px;top:65px;width:1px;height:15px;background:#000"></div>
<div class="abs" style="left:329px;top:63px;width:21px;height:20px;background:#fff;border:2px solid #b4b4b4;border-bottom-width:3px;border-bottom-color:#c4c4c4"></div>
<svg style="left:335px;top:66px" width="9" height="10" viewBox="0 0 10 11" fill="#000" stroke="none"><path d="M5 0l4 4.500h-2.800v3.500h-2.400v-3.500h-2.800zM0.500 9.500h9v1.500h-9z"></path></svg>
<span class="t" style="left:361px;top:67px;font-weight:bold">=</span>
<span class="t" style="left: 380px; top: 67px; transform-origin: 0px 0px; transform: scaleX(0.991);">1.234</span>
<span class="t" style="left:120px;top:95px"><span style="display: inline-block; width: 24px;"><span style="display: inline-block; white-space: pre; transform-origin: 0px 0px; transform: scaleX(0.9594);">桁数</span></span></span>
<div class="abs" style="left:154px;top:89px;width:196px;height:21px;background:#fff;border:1px solid #9c9c9c;box-shadow:0 0 0 1px #d0d0d0"></div>
<div class="abs" style="left:329px;top:90px;width:21px;height:20px;background:#fff;border:2px solid #b4b4b4;border-bottom-width:3px;border-bottom-color:#c4c4c4"></div>
<svg style="left:335px;top:93px" width="9" height="10" viewBox="0 0 10 11" fill="#000" stroke="none"><path d="M5 0l4 4.500h-2.800v3.500h-2.400v-3.500h-2.800zM0.500 9.500h9v1.500h-9z"></path></svg>
<span class="t" style="left:361px;top:95px;font-weight:bold">=</span>
<span class="t" style="left:380px;top:95px;color:#a0a0a0"><span style="display: inline-block; width: 23px;"><span style="display: inline-block; white-space: pre; transform-origin: 0px 0px; transform: scaleX(0.9194);">数値</span></span></span>
<span class="t" style="left:361px;top:126px;font-weight:bold">=</span>
<span class="t" style="left:6px;top:145px"><span style="display: inline-block; width: 24.02px;"><span style="display: inline-block; white-space: pre; transform-origin: 0px 0px; transform: scaleX(0.96);">数値</span></span><span style="display: inline-block; width: 9.26px;"><span style="display: inline-block; white-space: pre; transform-origin: 0px 0px; transform: scaleX(0.7401);">を</span></span><span style="display: inline-block; width: 24.02px;"><span style="display: inline-block; white-space: pre; transform-origin: 0px 0px; transform: scaleX(0.96);">指定</span></span><span style="display: inline-block; width: 18.51px;"><span style="display: inline-block; white-space: pre; transform-origin: 0px 0px; transform: scaleX(0.7401);">した</span></span><span style="display: inline-block; width: 24.02px;"><span style="display: inline-block; white-space: pre; transform-origin: 0px 0px; transform: scaleX(0.96);">桁数</span></span><span style="display: inline-block; width: 9.26px;"><span style="display: inline-block; white-space: pre; transform-origin: 0px 0px; transform: scaleX(0.7401);">に</span></span><span style="display: inline-block; width: 48.02px;"><span style="display: inline-block; white-space: pre; transform-origin: 0px 0px; transform: scaleX(0.96);">四捨五入</span></span><span style="display: inline-block; width: 18.51px;"><span style="display: inline-block; white-space: pre; transform-origin: 0px 0px; transform: scaleX(0.7401);">した</span></span><span style="display: inline-block; width: 12.01px;"><span style="display: inline-block; white-space: pre; transform-origin: 0px 0px; transform: scaleX(0.96);">値</span></span><span style="display: inline-block; width: 9.26px;"><span style="display: inline-block; white-space: pre; transform-origin: 0px 0px; transform: scaleX(0.7401);">を</span></span><span style="display: inline-block; width: 12.01px;"><span style="display: inline-block; white-space: pre; transform-origin: 0px 0px; transform: scaleX(0.96);">返</span></span><span style="display: inline-block; width: 36.09px;"><span style="display: inline-block; white-space: pre; transform-origin: 0px 0px; transform: scaleX(0.7401);">します。</span></span></span>
<span class="t" style="left:180px;top:172px"><span style="display: inline-block; width: 24px;"><span style="display: inline-block; white-space: pre; transform-origin: 0px 0px; transform: scaleX(0.9594);">数値</span></span></span>
<span class="t" style="left:213px;top:172px"><span style="display: inline-block; width: 18.76px;"><span style="display: inline-block; white-space: pre; transform-origin: 0px 0px; transform: scaleX(0.7498);">には</span></span><span style="display: inline-block; width: 48.02px;"><span style="display: inline-block; white-space: pre; transform-origin: 0px 0px; transform: scaleX(0.96);">四捨五入</span></span><span style="display: inline-block; width: 9.38px;"><span style="display: inline-block; white-space: pre; transform-origin: 0px 0px; transform: scaleX(0.7498);">の</span></span><span style="display: inline-block; width: 24.02px;"><span style="display: inline-block; white-space: pre; transform-origin: 0px 0px; transform: scaleX(0.96);">対象</span></span><span style="display: inline-block; width: 27.85px;"><span style="display: inline-block; white-space: pre; transform-origin: 0px 0px; transform: scaleX(0.7498);">となる</span></span><span style="display: inline-block; width: 24.02px;"><span style="display: inline-block; white-space: pre; transform-origin: 0px 0px; transform: scaleX(0.96);">数値</span></span><span style="display: inline-block; width: 9.38px;"><span style="display: inline-block; white-space: pre; transform-origin: 0px 0px; transform: scaleX(0.7498);">を</span></span><span style="display: inline-block; width: 24.02px;"><span style="display: inline-block; white-space: pre; transform-origin: 0px 0px; transform: scaleX(0.96);">指定</span></span><span style="display: inline-block; width: 36.57px;"><span style="display: inline-block; white-space: pre; transform-origin: 0px 0px; transform: scaleX(0.7498);">します。</span></span></span>
<div class="abs" style="left:6px;top:228px;width:580px;height:1px;background:#dadada"></div>
<span class="t" style="left:6px;top:245px"><span style="display: inline-block; width: 24.02px;"><span style="display: inline-block; white-space: pre; transform-origin: 0px 0px; transform: scaleX(0.96);">数式</span></span><span style="display: inline-block; width: 12.64px;"><span style="display: inline-block; white-space: pre; transform-origin: 0px 0px; transform: scaleX(1.0095);">の</span></span><span style="display: inline-block; width: 34.35px;"><span style="display: inline-block; white-space: pre; transform-origin: 0px 0px; transform: scaleX(0.96);">結果 =</span></span></span>
<span class="t" style="left:6px;top:279px;color:#0066cc"><span style="display: inline-block; width: 19.78px;"><span style="display: inline-block; white-space: pre; transform-origin: 0px 0px; transform: scaleX(0.7906);">この</span></span><span style="display: inline-block; width: 24.02px;"><span style="display: inline-block; white-space: pre; transform-origin: 0px 0px; transform: scaleX(0.96);">関数</span></span><span style="display: inline-block; width: 39.54px;"><span style="display: inline-block; white-space: pre; transform-origin: 0px 0px; transform: scaleX(0.7906);">のヘルプ</span></span><span style="display: inline-block; width: 16.66px;"><span style="display: inline-block; white-space: pre; transform-origin: 0px 0px; transform: scaleX(0.96);">(H)</span></span></span>
<div class="abs" style="left:7px;top:290px;width:99px;height:1px;background:#0066cc"></div>
<div class="abs" style="left:427px;top:271px;width:75px;height:25px;background:#e1e1e1;border:2px solid #0078d7"></div>
<span class="t" style="left:427px;top:277px;width:75px;text-align:center;font-size:12.5px">OK</span>
<div class="abs" style="left:511px;top:271px;width:75px;height:25px;background:#e1e1e1;border:1px solid #adadad"></div>
<span class="t" style="left:524px;top:278px"><span style="display: inline-block; width: 48px;"><span style="display: inline-block; white-space: pre; transform-origin: 0px 0px; transform: scaleX(0.7678);">キャンセル</span></span></span>
</div>
<div id="frame"></div>


</body></html>
